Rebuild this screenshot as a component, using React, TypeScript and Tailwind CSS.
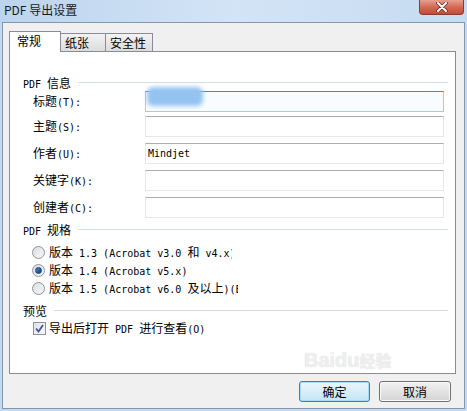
function L({ children }: { children: React.ReactNode }) {
  return (
    <span className="font-['DejaVu_Sans_Mono',monospace] text-[10px] whitespace-pre">
      {children}
    </span>
  );
}

function GroupHeader({ children }: { children: React.ReactNode }) {
  return (
    <div className="h-[14px] pl-[13px] pr-[7px] flex items-center">
      <span className="whitespace-pre leading-none">{children}</span>
      <div className="flex-1 ml-[7px] border-t border-t-[#d5dde3] border-b border-b-white" />
    </div>
  );
}

function Field({
  label,
  value,
  focused,
  className,
}: {
  label: React.ReactNode;
  value?: string;
  focused?: boolean;
  className?: string;
}) {
  return (
    <div className={`h-[21px] pl-[23px] flex items-center relative ${className ?? ""}`}>
      <div className="w-[112px] whitespace-pre leading-none">{label}</div>
      <div
        className={`w-[299px] h-[21px] pl-[2px] flex items-center ${
          focused
            ? "border border-[#a9c8e2] border-t-[#4f86b4] bg-[#f9fcfe]"
            : "border border-[#e3e6ea] border-t-[#abadb3] bg-white"
        }`}
      >
        {value && <L>{value}</L>}
      </div>
      {focused && (
        <div className="absolute left-[137px] top-[-4px] w-[56px] h-[19px] rounded-[6px] bg-[#94c3f1] blur-[2px]" />
      )}
    </div>
  );
}

function Radio({ checked }: { checked?: boolean }) {
  return (
    <div className="w-[13px] h-[13px] rounded-full border border-[#8f9399] bg-gradient-to-br from-[#d9dde2] to-[#f7f8f9] flex items-center justify-center shrink-0">
      {checked && (
        <div className="w-[7px] h-[7px] rounded-full bg-gradient-to-br from-[#4a8bd0] to-[#0e3c7a] border border-[#173f72]" />
      )}
    </div>
  );
}

export default function App() {
  return (
    <div className="w-[467px] h-[411px] flex flex-col overflow-hidden bg-[#c3d9f0] font-['Noto_Sans_CJK_SC',sans-serif] text-[12px] text-black relative">
      {/* title bar */}
      <div className="h-[22px] flex items-start bg-gradient-to-r from-[#bcd4ee] via-[#d3e4f6] to-[#c6dbf1]">
        <span className="pl-[4px] pt-[2px] text-[12px] text-[#1a1a1a] leading-[16px] whitespace-pre">
          PDF 导出设置
        </span>
        <div className="ml-auto mr-[3px] w-[45px] h-[15px] rounded-b-[4px] border border-t-0 border-[#8b3b2f] bg-gradient-to-b from-[#e7a090] via-[#d26a55] to-[#c24a36] flex items-center justify-center">
          <svg width="12" height="10" viewBox="0 0 12 10">
            <path d="M2 1 L10 9 M10 1 L2 9" stroke="#7a2a20" strokeWidth="3.6" strokeLinecap="round" />
            <path d="M2 1 L10 9 M10 1 L2 9" stroke="#ffffff" strokeWidth="2" strokeLinecap="round" />
          </svg>
        </div>
      </div>

      {/* client */}
      <div className="mx-[2px] mb-[2px] flex-1 bg-[#f0f0f0] border border-[#8797ab] flex flex-col">
        <div className="pl-[6px] pr-[8px] pt-[8px]">
          {/* tabs */}
          <div className="flex items-end h-[20px]">
            <div className="w-[52px] h-[21px] -mb-px relative z-10 bg-white border border-b-0 border-[#898c95] pl-[7px] pt-[1px] leading-[16px]">
              常规
            </div>
            <div className="w-[45px] h-[18px] border border-b-0 border-l-0 border-[#898c95] bg-gradient-to-b from-[#f3f3f3] to-[#dcdcdc] pl-[4px] leading-[17px]">
              纸张
            </div>
            <div className="w-[47px] h-[18px] border border-b-0 border-l-0 border-[#898c95] bg-gradient-to-b from-[#f3f3f3] to-[#dcdcdc] pl-[4px] leading-[17px]">
              安全性
            </div>
          </div>

          {/* panel */}
          <div className="h-[323px] bg-white border border-[#898c95] flex flex-col pt-[24px]">
            <GroupHeader>
              <L>PDF </L>信息
            </GroupHeader>
            <Field
              className="mt-[1px]"
              focused
              label={
                <>
                  标题<L>(T):</L>
                </>
              }
            />
            <Field
              className="mt-[4px]"
              label={
                <>
                  主题<L>(S):</L>
                </>
              }
            />
            <Field
              className="mt-[6px]"
              value="Mindjet"
              label={
                <>
                  作者<L>(U):</L>
                </>
              }
            />
            <Field
              className="mt-[6px]"
              label={
                <>
                  关键字<L>(K):</L>
                </>
              }
            />
            <Field
              className="mt-[6px]"
              label={
                <>
                  创建者<L>(C):</L>
                </>
              }
            />

            <div className="mt-[5px]">
              <GroupHeader>
                <L>PDF </L>规格
              </GroupHeader>
            </div>
            <div className="mt-[6px] flex flex-col">
              <div className="h-[18px] pl-[22px] flex items-center gap-[4px]">
                <Radio />
                <div className="w-[183px] overflow-hidden whitespace-pre leading-none">
                  版本<L> 1.3 (Acrobat v3.0 </L>和<L> v4.x)</L>
                </div>
              </div>
              <div className="h-[18px] pl-[22px] flex items-center gap-[4px]">
                <Radio checked />
                <div className="whitespace-pre leading-none">
                  版本<L> 1.4 (Acrobat v5.x)</L>
                </div>
              </div>
              <div className="h-[18px] pl-[22px] flex items-center gap-[4px]">
                <Radio />
                <div className="w-[189px] overflow-hidden whitespace-pre leading-none">
                  版本<L> 1.5 (Acrobat v6.0 </L>及以上<L>)(E)</L>
                </div>
              </div>
            </div>

            <div className="mt-[7px]">
              <GroupHeader>预览</GroupHeader>
            </div>
            <div className="mt-[1px] h-[18px] pl-[23px] flex items-center gap-[3px]">
              <div className="w-[13px] h-[13px] border border-[#8f9399] bg-gradient-to-br from-[#dfe2e6] to-[#fafafa] flex items-center justify-center">
                <svg width="9" height="9" viewBox="0 0 9 9">
                  <path d="M1 4.5 L3.5 7.5 L8 1" fill="none" stroke="#3c5a9a" strokeWidth="1.8" />
                </svg>
              </div>
              <div className="whitespace-pre leading-none">
                导出后打开<L> PDF </L>进行查看<L>(O)</L>
              </div>
            </div>
          </div>
        </div>

        {/* buttons */}
        <div className="mt-[7px] pr-[13px] flex justify-end gap-[9px]">
          <button className="w-[71px] h-[21px] rounded-[3px] border border-[#3c7fb1] bg-gradient-to-b from-[#eaf6fd] to-[#c4e5f6] shadow-[inset_0_0_0_1px_#a6dcf7] leading-none">
            确定
          </button>
          <button className="w-[72px] h-[21px] rounded-[3px] border border-[#707070] bg-gradient-to-b from-[#f2f2f2] to-[#d4d4d4] shadow-[inset_0_0_0_1px_#fbfbfb] leading-none">
            取消
          </button>
        </div>
      </div>

      {/* watermark */}
      <div className="absolute left-[304px] top-[350px] leading-none text-[20px] font-bold text-white/70 pointer-events-none font-['Liberation_Sans',sans-serif] [text-shadow:0_0_1px_#c8c8c8] whitespace-pre">
        Baidu<span className="text-[16px] font-['Noto_Sans_CJK_SC',sans-serif]">经验</span>
      </div>
    </div>
  );
}
